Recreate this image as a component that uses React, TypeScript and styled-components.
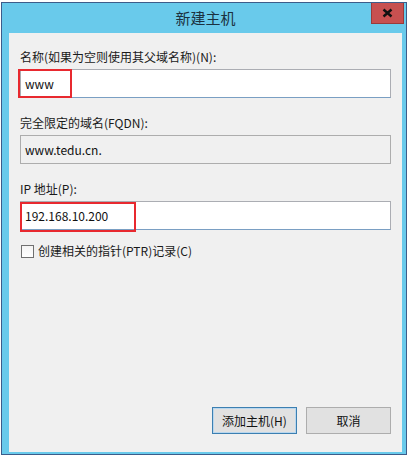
import React from 'react';
import styled, { createGlobalStyle } from 'styled-components';

const GlobalStyle = createGlobalStyle`
  html, body {
    margin: 0;
    padding: 0;
    background: #ffffff;
  }
  body {
    font-family: "Noto Sans CJK SC", "Liberation Sans", sans-serif;
    font-size: 12px;
    color: #000;
  }
`;

const Window = styled.div`
  box-sizing: border-box;
  margin: 2px 0 0 1px;
  width: 406px;
  height: 453px;
  border: 1px solid #3d5c8a;
  background: #69caeb;
  padding: 0 4px 2px 7px;
  display: flex;
  flex-direction: column;
`;

const TitleBar = styled.div`
  height: 30px;
  display: grid;
  grid-template-columns: 1fr auto 1fr;
  align-items: start;
`;

const Title = styled.div`
  grid-column: 2;
  font-size: 15px;
  line-height: 18px;
  margin-top: 6px;
  color: #1b3140;
`;

const CloseButton = styled.div`
  grid-column: 3;
  justify-self: end;
  box-sizing: border-box;
  width: 33px;
  height: 21px;
  margin-right: -2px;
  background: #c75050;
  border: 1px solid #9a3a3a;
  border-top: none;
  display: flex;
  align-items: center;
  justify-content: center;
`;

const Content = styled.div`
  flex: 1;
  background: #f0f0f0;
  padding: 16px 11px 18px 11px;
  display: flex;
  flex-direction: column;
`;

const Field = styled.div<{ $top?: number }>`
  display: flex;
  flex-direction: column;
  margin-top: ${p => p.$top ?? 0}px;
`;

const Label = styled.div`
  line-height: 16px;
  height: 16px;
  margin-bottom: 4px;
  color: #1a1a1a;
`;

const InputBox = styled.div<{ $disabled?: boolean; $h?: number }>`
  position: relative;
  box-sizing: border-box;
  width: 371px;
  height: ${p => p.$h ?? 29}px;
  border: 1px solid ${p => (p.$disabled ? '#adadad' : '#abadb3')};
  border-bottom-color: ${p => (p.$disabled ? '#adadad' : '#7a9fc3')};
  background: ${p => (p.$disabled ? '#f0f0f0' : '#ffffff')};
  padding: 0 4px;
  display: flex;
  align-items: center;
  font-size: 12px;
  color: #111;
`;

const Highlight = styled.div<{ $left: number; $top: number; $w: number; $h: number }>`
  position: absolute;
  box-sizing: border-box;
  left: ${p => p.$left}px;
  top: ${p => p.$top}px;
  width: ${p => p.$w}px;
  height: ${p => p.$h}px;
  border: 2px solid #e8292f;
  pointer-events: none;
`;

const CheckRow = styled.label`
  margin-top: 13px;
  display: flex;
  align-items: center;
  gap: 4px;
  line-height: 16px;
  margin-left: 1px;
  color: #1a1a1a;
`;

const CheckBox = styled.span`
  box-sizing: border-box;
  width: 13px;
  height: 13px;
  border: 1px solid #707070;
  background: linear-gradient(#f4f4f4, #ffffff);
`;

const Footer = styled.div`
  margin-top: auto;
  display: flex;
  justify-content: flex-end;
  gap: 9px;
`;

const Button = styled.button<{ $default?: boolean }>`
  box-sizing: border-box;
  width: 85px;
  height: 27px;
  margin: 0;
  padding: 0;
  font-family: inherit;
  font-size: 12px;
  color: #111;
  background: #e1e1e1;
  border: 1px solid ${p => (p.$default ? '#3c7fb1' : '#adadad')};
  box-shadow: ${p => (p.$default ? 'inset 0 0 0 1px #b9d7ee' : 'none')};
`;

const App = () => {
  return (
    <>
      <GlobalStyle />
      <Window>
        <TitleBar>
          <Title>新建主机</Title>
          <CloseButton>
            <svg width="11" height="10" viewBox="0 0 11 10">
              <path d="M1.5 1.5 L9.5 8.5 M9.5 1.5 L1.5 8.5" stroke="#111" strokeWidth="2.4" />
            </svg>
          </CloseButton>
        </TitleBar>
        <Content>
          <Field>
            <Label>名称(如果为空则使用其父域名称)(N):</Label>
            <InputBox>
              www
              <Highlight $left={-3} $top={-1} $w={54} $h={29} />
            </InputBox>
          </Field>
          <Field $top={17}>
            <Label>完全限定的域名(FQDN):</Label>
            <InputBox $disabled $h={29}>www.tedu.cn.</InputBox>
          </Field>
          <Field $top={17}>
            <Label>IP 地址(P):</Label>
            <InputBox>
              192.168.10.200
              <Highlight $left={-1} $top={0} $w={116} $h={30} />
            </InputBox>
          </Field>
          <CheckRow>
            <CheckBox />
            创建相关的指针(PTR)记录(C)
          </CheckRow>
          <Footer>
            <Button $default>添加主机(H)</Button>
            <Button>取消</Button>
          </Footer>
        </Content>
      </Window>
    </>
  );
};

export default App;
